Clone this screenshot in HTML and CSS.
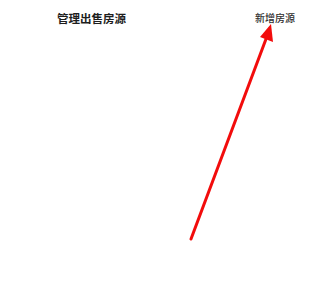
FILE: index.html
```html
<!DOCTYPE html>
<html lang="zh">
<head>
<meta charset="utf-8">
<link rel="stylesheet" href="styles.css">
</head>
<body>
<div class="page">
  <header class="topbar">
    <h1 class="title">管理出售房源</h1>
    <a class="add-link">新增房源</a>
  </header>
  <svg class="annotation" width="316" height="291" viewBox="0 0 316 291">
    <line x1="191" y1="239" x2="266" y2="39" stroke="#f20c0c" stroke-width="3" stroke-linecap="round"/>
    <polygon points="271,24 260,37 273,42" fill="#f20c0c"/>
  </svg>
</div>
</body>
</html>
```
FILE: styles.css
```css
html, body {
  margin: 0;
  padding: 0;
  background: #ffffff;
}
.page {
  position: relative;
  width: 316px;
  height: 291px;
  font-family: "Noto Sans CJK SC", "Noto Sans", sans-serif;
}
.topbar {
  display: flex;
  justify-content: space-between;
  align-items: center;
  padding: 11px 21px 0 57px;
  height: 14px;
}
.title {
  margin: 0;
  font-size: 11.5px;
  line-height: 14px;
  font-weight: 700;
  color: #1e1e1e;
}
.add-link {
  font-size: 10px;
  line-height: 14px;
  font-weight: 500;
  color: #2e2e2e;
  text-decoration: none;
}
.annotation {
  position: absolute;
  left: 0;
  top: 0;
}
```
